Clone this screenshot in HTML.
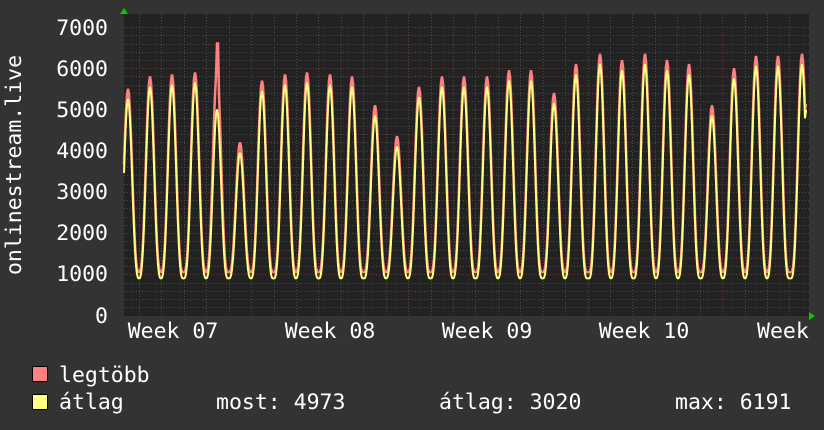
<!DOCTYPE html>
<html><head><meta charset="utf-8"><style>
html,body{margin:0;padding:0;background:#333;}
body{width:824px;height:430px;overflow:hidden;position:relative;font-family:"DejaVu Sans Mono","Liberation Mono",monospace;color:#fff;}
svg{position:absolute;left:0;top:0}
</style></head><body>
<svg id="s" width="824" height="430" xmlns="http://www.w3.org/2000/svg" font-family="DejaVu Sans Mono, Liberation Mono, monospace" fill="#fff">
<rect x="124" y="14" width="685" height="302" fill="#222"/>
<g id="grid"></g>
<g id="lines"></g>
<g font-size="21.5" text-anchor="end">
<text x="108" y="35">7000</text><text x="108" y="76">6000</text><text x="108" y="117">5000</text><text x="108" y="158">4000</text><text x="108" y="199">3000</text><text x="108" y="240">2000</text><text x="108" y="281">1000</text><text x="108" y="323">0</text>
</g>
<text font-size="21.5" transform="translate(21,165) rotate(-90)" text-anchor="middle">onlinestream.live</text>
<g font-size="21.5" text-anchor="middle">
<text x="173" y="338">Week 07</text><text x="330" y="338">Week 08</text><text x="487" y="338">Week 09</text><text x="644" y="338">Week 10</text><text x="757" y="338" text-anchor="start">Week</text>
</g>
<polygon points="120,14 124,8 128,14" fill="#0c0"/>
<polygon points="809,312 815,316 809,320" fill="#0c0"/>
<rect x="32.5" y="366.5" width="15" height="15" fill="#ff8080" stroke="#000"/>
<rect x="32.5" y="394.5" width="15" height="15" fill="#ffff80" stroke="#000"/>
<g font-size="21.5">
<text x="59" y="382">legtöbb</text>
<text x="59" y="409">átlag</text>
<text x="216" y="409">most: 4973</text>
<text x="439" y="409">átlag: 3020</text>
<text x="675" y="409">max: 6191</text>
</g>
</svg>
<script>
var NS="http://www.w3.org/2000/svg";
function el(p,n,a){var e=document.createElementNS(NS,n);for(var k in a)e.setAttribute(k,a[k]);p.appendChild(e);return e;}
var g=document.getElementById('grid');
function Y(v){return 315.5-v*0.04121;}
for(var v=200;v<=7000;v+=200){var y=Math.round(Y(v))+.5;el(g,'line',{x1:124,x2:809,y1:y,y2:y,stroke:v%1000==0?'#6a3a3a':'#4a4a4a','stroke-dasharray':'1,2'});}
for(var x=139;x<809;x+=22.43){var xx=Math.round(x)+.5;var wk=[252,409,566,723].some(function(w){return Math.abs(w-x)<3});el(g,'line',{x1:xx,x2:xx,y1:14,y2:316,stroke:wk?'#6a3a3a':'#4a4a4a','stroke-dasharray':'1,2'});}
var px=[128,150,172,195,217,240,262,285,307,330,352,375,397,419,442,464,487,509,531,554,576,600,622,645,667,689,712,734,756,778,802];
var red=[5500,5800,5850,5900,5950,4200,5700,5850,5900,5850,5800,5100,4350,5550,5800,5800,5800,5950,5950,5400,6100,6350,6200,6350,6200,6100,5100,6000,6300,6300,6350];
var yel=red.map(function(r){return r-250;});yel[4]=5000;
function val(x,arr,mn){var bi=0,bd=1e9;for(var i=0;i<px.length;i++){var d=Math.abs(x-px[i]);if(d<bd){bd=d;bi=i;}}
var d=(x-px[bi])/22.43;if(d>0.5)d=0.5;if(d<-0.5)d=-0.5;var f=Math.pow((1+Math.cos(d*2*Math.PI))/2,1.6);return mn+(arr[bi]-mn)*f;}
function pts(arr,mn,end){var s=[];for(var x=124;x<=807;x+=1){var v=val(x,arr,mn);if(x>=806)v=end;s.push(x+','+Y(v).toFixed(1));}return s.join(' ');}
var L=document.getElementById('lines');
var rp=pts(red,1050,5100);
rp=rp.replace(/217,[\d.]+/,'217,'+Y(6600).toFixed(1)).replace(/218,[\d.]+/,'218,'+Y(6600).toFixed(1));
el(L,'polyline',{points:rp,fill:'none',stroke:'#ff8080','stroke-width':2.5});
el(L,'polyline',{points:pts(yel,900,4973),fill:'none',stroke:'#ffff80','stroke-width':2});
</script>
</body></html>
